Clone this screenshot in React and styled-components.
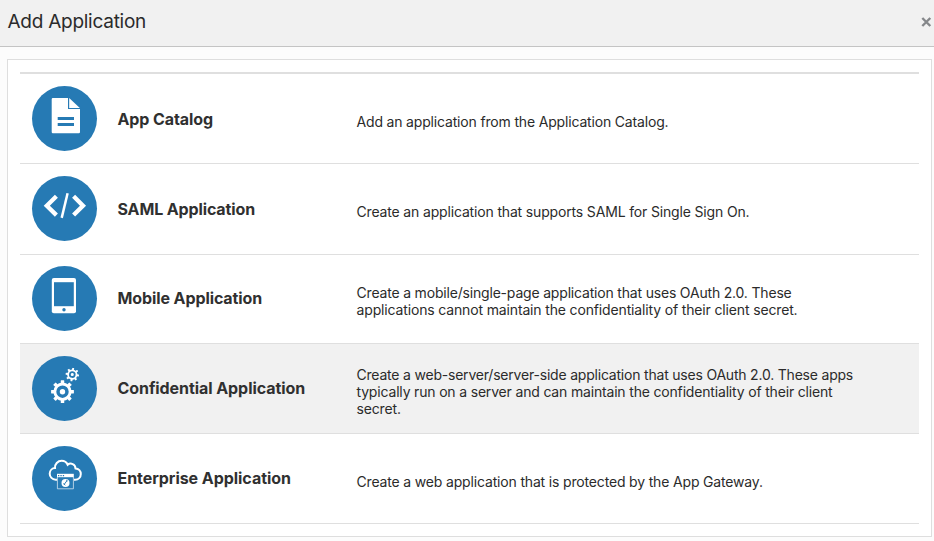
import React from "react";
import styled, { createGlobalStyle } from "styled-components";

const GlobalStyle = createGlobalStyle`
  * { box-sizing: border-box; }
  body { margin: 0; background: #fcfcfc; color: #2b2b2b; font-family: Inter, "Liberation Sans", sans-serif; }
`;

const Dialog = styled.div`
  height: 541px;
  overflow: hidden;
`;

const Header = styled.header`
  display: flex;
  justify-content: space-between;
  height: 47px;
  padding: 0 2px 0 7.5px;
  background: #f1f1f1;
  border-bottom: 1px solid #c4c4c4;
`;

const Title = styled.h1`
  margin: 0;
  font-size: 19px;
  font-weight: 400;
  line-height: 44px;
  height: 44px;
  letter-spacing: -0.26px;
  white-space: nowrap;
`;

const CloseButton = styled.button`
  display: flex;
  width: 11px;
  height: 11px;
  margin: 16px 0 0;
  padding: 0;
  border: 0;
  background: none;
`;

const Panel = styled.main`
  height: 478px;
  margin: 12px 2px 0 7px;
  padding: 12px;
  background: #fff;
  border: 1px solid #dedede;
`;

const List = styled.ul`
  margin: 0;
  padding: 0;
  list-style: none;
  border-top: 2px solid #dfdfdf;
`;

const Row = styled.li`
  display: grid;
  grid-template-columns: 65px 239px 1fr;
  height: ${(p) => p.$height}px;
  padding: ${(p) => p.$top}px 12px 0;
  border-bottom: 1px solid #dfdfdf;
  background: ${(p) => (p.$active ? "#f1f1f1" : "#fff")};
`;

const Badge = styled.span`
  display: block;
  width: 65px;
  height: 65px;
  border-radius: 50%;
  background: #267ab4;
  svg { display: block; }
`;

const Name = styled.h2`
  margin: ${(p) => p.$offset}px 0 0;
  padding-left: 20.5px;
  font-size: 16px;
  font-weight: 650;
  line-height: 20px;
  letter-spacing: ${(p) => p.$spacing}px;
  white-space: nowrap;
  color: #303030;
`;

const Description = styled.p`
  margin: ${(p) => p.$offset}px 0 0;
  padding-left: 20.5px;
  font-size: 14px;
  line-height: 17px;
  white-space: nowrap;
`;

const Line = styled.span`
  display: block;
  letter-spacing: ${(p) => p.$spacing}px;
`;

const Icon = ({ children }) => (
  <svg width="65" height="65" viewBox="0 0 65 65" fill="none" aria-hidden="true">
    {children}
  </svg>
);

const DocumentIcon = () => (
  <Icon>
    <path fill="#fff" d="M20.9 12H36v11h12v23a1.2 1.2 0 0 1-1.2 1.2H20.9a1.2 1.2 0 0 1-1.2-1.2V13.2A1.2 1.2 0 0 1 20.9 12Z" />
    <path fill="#fff" d="M37.2 12 47.8 22H37.2Z" />
    <path fill="#267ab4" d="M25.7 31H42v2.9H25.7ZM25.7 37H42v2.9H25.7Z" />
  </Icon>
);

const CodeIcon = () => (
  <Icon>
    <path stroke="#fff" strokeWidth="4.3" d="M24.4 20.3 14.8 29.7l9.6 9.4M41.6 20.3l9.4 9.4-9.4 9.4" />
    <path stroke="#fff" strokeWidth="2.5" d="M35.6 17.3 29.7 41.9" />
  </Icon>
);

const TabletIcon = () => (
  <Icon>
    <rect x="19.8" y="12" width="24.2" height="35.2" rx="2" fill="#fff" />
    <path fill="#267ab4" d="M22 16.2h19.8v24H22Z" />
    <circle cx="32" cy="43.8" r="1.7" fill="#267ab4" />
  </Icon>
);

const Gear = ({ x, y, body, outer, ring, tooth, dot, turn }) => (
  <g transform={`translate(${x} ${y}) rotate(${turn})`}>
    <circle r={body - ring / 2} stroke="#fff" strokeWidth={ring} />
    {[0, 45, 90, 135, 180, 225, 270, 315].map((a) => (
      <rect key={a} x={-tooth / 2} y={-outer} width={tooth} height={outer - body + 0.8} rx="0.4" fill="#fff" transform={`rotate(${a})`} />
    ))}
    <circle r={dot} fill="#fff" />
  </g>
);

const GearsIcon = () => (
  <Icon>
    <Gear x={30.5} y={35.7} body={9.1} outer={11.4} ring={2.9} tooth={3.5} dot={2.7} turn={0} />
    <Gear x={40.3} y={18.6} body={5.1} outer={6.7} ring={1.8} tooth={2} dot={1.5} turn={8} />
  </Icon>
);

const CloudAppIcon = () => (
  <Icon>
    <path
      stroke="#fff"
      strokeWidth="2"
      d="M25 33.7h-1.4a6 6 0 0 1-5.9-6c0-3.5 2.7-5.5 5.3-5.6-.5-4 2.9-7.3 6.6-7.3 3 0 5.1 1.6 6.1 4 2.9-2.5 7.7-.7 7.8 3.6 3.2.2 5.3 2.6 5.3 5.6 0 3.3-2.3 5.7-5.7 5.7H42"
    />
    <path fill="#fff" d="M25 27.8h16.8v3.4H25Z" />
    <path fill="#267ab4" d="M26 29h1.3v1.2H26ZM28.4 29h1.3v1.2h-1.3ZM30.8 29h1.3v1.2h-1.3Z" />
    <path stroke="#d3e4f0" strokeWidth=".8" d="M25.4 31v11.8h16V31" />
    <circle cx="33.5" cy="37" r="4" fill="#fff" />
    <path stroke="#267ab4" strokeWidth="1" d="m32 38.7 2.8-3.8M34.2 34.2l1.5.8M31.5 37.5l1.8 1.6" />
  </Icon>
);

const applications = [
  {
    name: "App Catalog", icon: <DocumentIcon />, height: 90, top: 12, nameOffset: 23, nameSpacing: -0.1, offset: 27,
    lines: [["Add an application from the Application Catalog.", -0.17]],
  },
  {
    name: "SAML Application", icon: <CodeIcon />, height: 91, top: 12, nameOffset: 23, nameSpacing: -0.13, offset: 27,
    lines: [["Create an application that supports SAML for Single Sign On.", -0.16]],
  },
  {
    name: "Mobile Application", icon: <TabletIcon />, height: 89, top: 11, nameOffset: 22, nameSpacing: -0.1, offset: 18,
    lines: [
      ["Create a mobile/single-page application that uses OAuth 2.0. These", -0.185],
      ["applications cannot maintain the confidentiality of their client secret.", -0.15],
    ],
  },
  {
    name: "Confidential Application", icon: <GearsIcon />, height: 90, top: 12, nameOffset: 22, nameSpacing: -0.07, offset: 10, active: true,
    lines: [
      ["Create a web-server/server-side application that uses OAuth 2.0. These apps", -0.205],
      ["typically run on a server and can maintain the confidentiality of their client", -0.175],
      ["secret.", -0.15],
    ],
  },
  {
    name: "Enterprise Application", icon: <CloudAppIcon />, height: 90, top: 12, nameOffset: 22, nameSpacing: -0.05, offset: 27,
    lines: [["Create a web application that is protected by the App Gateway.", -0.165]],
  },
];

export default function App() {
  return (
    <Dialog>
      <GlobalStyle />
      <Header>
        <Title>Add Application</Title>
        <CloseButton aria-label="Close">
          <svg width="11" height="11" viewBox="0 0 11 11" fill="none">
            <path d="M1.3 2 9.3 10M9.3 2 1.3 10" stroke="#85878a" strokeWidth="2.4" />
          </svg>
        </CloseButton>
      </Header>
      <Panel>
        <List>
          {applications.map((app) => (
            <Row key={app.name} $height={app.height} $top={app.top} $active={app.active}>
              <Badge>{app.icon}</Badge>
              <Name $offset={app.nameOffset} $spacing={app.nameSpacing}>{app.name}</Name>
              <Description $offset={app.offset}>
                {app.lines.map(([text, spacing]) => (
                  <Line key={text} $spacing={spacing}>{text}</Line>
                ))}
              </Description>
            </Row>
          ))}
        </List>
      </Panel>
    </Dialog>
  );
}
